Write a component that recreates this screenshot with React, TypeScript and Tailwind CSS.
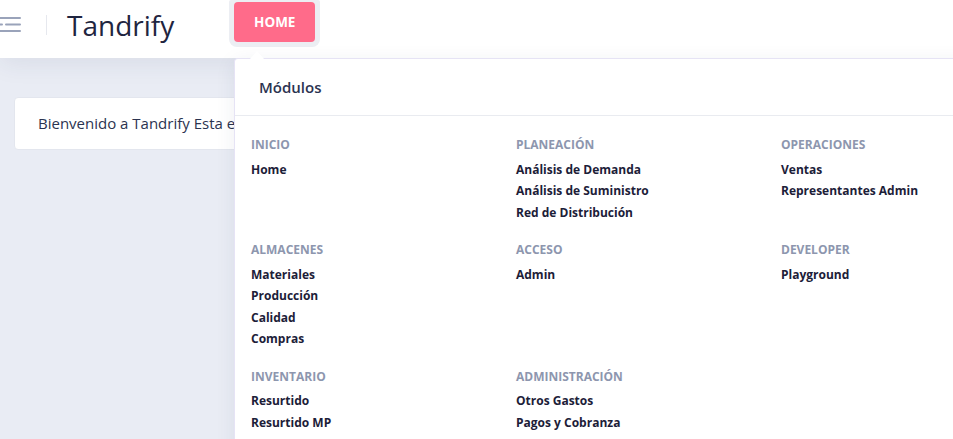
import { Fragment } from 'react'

const sections = [
  { title: 'Inicio', items: ['Home'] },
  { title: 'Planeación', items: ['Análisis de Demanda', 'Análisis de Suministro', 'Red de Distribución'] },
  { title: 'Operaciones', items: ['Ventas', 'Representantes Admin'] },
  { title: 'Almacenes', items: ['Materiales', 'Producción', 'Calidad', 'Compras'] },
  { title: 'Acceso', items: ['Admin'] },
  { title: 'Developer', items: ['Playground'] },
  { title: 'Inventario', items: ['Resurtido', 'Resurtido MP'] },
  { title: 'Administración', items: ['Otros Gastos', 'Pagos y Cobranza'] },
]

function MenuIcon() {
  return (
    <svg width="24" height="16" viewBox="0 0 24 16" className="text-[#9aa3ba]">
      <rect x="-2" y="0" width="23" height="2" rx="1" fill="currentColor" />
      <rect x="-2" y="6.5" width="5" height="2" rx="1" fill="currentColor" />
      <rect x="5" y="6.5" width="16" height="2" rx="1" fill="currentColor" />
      <rect x="-2" y="13" width="23" height="2" rx="1" fill="currentColor" />
    </svg>
  )
}

export default function App() {
  return (
    <div
      className="relative h-[439px] w-[953px] overflow-hidden bg-[#e9ecf4] text-[#1f2540]"
      style={{ fontFamily: '"Open Sans", "Liberation Sans", sans-serif' }}
    >
      {/* Header */}
      <header className="relative z-10 flex h-[58px] items-center bg-white shadow-[0_6px_24px_rgba(40,50,90,0.08)]">
        <div className="flex h-full items-center pb-[8px]">
          <MenuIcon />
          <div className="ml-[22px] h-[20px] w-px bg-[#e6e8ee]" />
          <span className="ml-[20px] text-[28px] leading-none text-[#1f2540]">Tandrify</span>
        </div>
        <div className="ml-[55px] self-start rounded-b-[8px] rounded-t-[2px] bg-[#eceef3] px-[5px] pb-[5px] pt-[2px]">
          <button className="flex h-[40px] w-[81px] items-center justify-center rounded-[4px] bg-[#ff6b8a] text-[13.5px] font-bold text-white">
            HOME
          </button>
        </div>
      </header>

      {/* Page content */}
      <main className="px-[14px] pt-[39px]">
        <div className="flex h-[53px] w-[600px] items-center rounded-[4px] border border-[#e3e6ee] bg-white px-[23px] text-[15px] text-[#2b3350]">
          Bienvenido a Tandrify Esta es la plataforma de planeación y operaciones
        </div>
      </main>

      {/* Dropdown menu */}
      <div className="absolute left-[234px] top-[58px] z-20 h-[400px] w-[740px] rounded-tl-[4px] border-l border-t border-[#e6e3f5] bg-white shadow-[0_4px_20px_rgba(40,50,90,0.08)]">
        <div className="absolute -top-[8px] left-[15px] h-0 w-0 border-x-[7px] border-b-[8px] border-x-transparent border-b-white" />
        <div className="flex h-[57px] items-center border-b border-[#e9ebf0] pl-[24px] text-[15px] font-semibold text-[#2b3350]">
          Módulos
        </div>
        <div className="grid grid-cols-[265px_265px_1fr] gap-y-[18px] pl-[16px] pt-[20px]">
          {sections.map((s) => (
            <div key={s.title}>
              <div className="text-[12px] font-bold uppercase leading-[18px] text-[#8d96ae]">{s.title}</div>
              <ul className="mt-[4.5px] flex flex-col">
                {s.items.map((item) => (
                  <Fragment key={item}>
                    <li className="text-[12px] font-bold leading-[21.5px] text-[#1c2038]">{item}</li>
                  </Fragment>
                ))}
              </ul>
            </div>
          ))}
        </div>
      </div>
    </div>
  )
}
